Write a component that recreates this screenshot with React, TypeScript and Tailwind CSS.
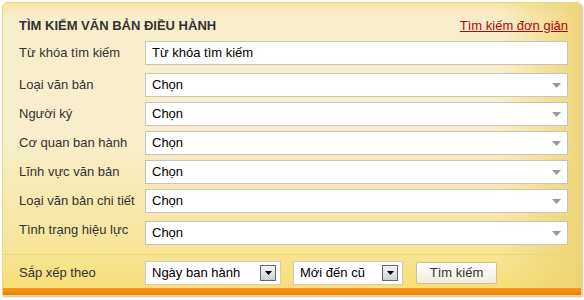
import React from "react";

const labelCls = "w-[126px] shrink-0 text-[13px] text-[#333]";

function Select({ text }: { text: string }) {
  return (
    <div className="relative flex h-[24px] w-[423px] items-center border border-[#c8c4b8] bg-white pl-[6px] text-[13px] text-black">
      <span>{text}</span>
      <svg className="absolute right-[6px] top-[9px]" width="9" height="5" viewBox="0 0 9 5">
        <path d="M0 0 L9 0 L4.5 5 Z" fill="#999" />
      </svg>
    </div>
  );
}

function Row({ label, children, cls }: { label: string; children: React.ReactNode; cls: string }) {
  return (
    <div className={"flex items-center pl-[16px] " + cls}>
      <div className={labelCls}>{label}</div>
      {children}
    </div>
  );
}

function SmallSelect({ text, w }: { text: string; w: string }) {
  return (
    <div className={"flex h-[24px] items-center justify-between border border-[#d0ccc0] bg-white pl-[6px] pr-[4px] text-[13px] text-black " + w}>
      <span>{text}</span>
      <div className="flex h-[16px] w-[16px] items-center justify-center border border-[#666] bg-[linear-gradient(to_bottom,#f4f4f4,#d0d0d0)]">
        <svg width="7" height="4" viewBox="0 0 7 4">
          <path d="M0 0 L7 0 L3.5 4 Z" fill="#000" />
        </svg>
      </div>
    </div>
  );
}

export default function App() {
  return (
    <div
      className="h-[300px] w-[584px] bg-white pl-[2px] pt-[2px]"
      style={{ fontFamily: '"Liberation Sans", Arial, sans-serif' }}
    >
      <div className="relative h-[294px] w-[580px] overflow-hidden rounded-t-[5px] border border-[#ead78c] bg-[linear-gradient(to_right,rgba(248,239,205,0)_86%,rgba(238,210,110,0.85)_100%),linear-gradient(to_bottom,#f6e5a6_0px,#f8eecb_14px,#f8eecb_45%,#f7e6a0_80%,#f9de74_100%)] shadow-[1px_1px_2px_rgba(0,0,0,0.25)]">
        <div className="flex h-[38px] items-start justify-between pl-[16px] pr-[13px] pt-[15px]">
          <div className="text-[13px] font-bold leading-[16px] text-[#333]">TÌM KIẾM VĂN BẢN ĐIỀU HÀNH</div>
          <a className="text-[13px] leading-[16px] text-[#c00000] underline" href="#">
            Tìm kiếm đơn giản
          </a>
        </div>
        <Row label="Từ khóa tìm kiếm" cls="h-[24px]">
          <div className="flex h-[24px] w-[423px] items-center border border-[#c8c4b8] bg-white pl-[6px] text-[13px] text-black">
            Từ khóa tìm kiếm
          </div>
        </Row>
        <div className="mt-[8px] flex flex-col gap-[5px]">
          <Row label="Loại văn bản" cls="h-[24px]"><Select text="Chọn" /></Row>
          <Row label="Người ký" cls="h-[24px]"><Select text="Chọn" /></Row>
          <Row label="Cơ quan ban hành" cls="h-[24px]"><Select text="Chọn" /></Row>
          <Row label="Lĩnh vực văn bản" cls="h-[24px]"><Select text="Chọn" /></Row>
          <Row label="Loại văn bản chi tiết" cls="h-[24px]"><Select text="Chọn" /></Row>
        </div>
        <div className="mt-[4px] flex items-start pl-[16px]">
          <div className={labelCls + " pt-[3px]"}>Tình trạng hiệu lực</div>
          <div className="mt-[4px]"><Select text="Chọn" /></div>
        </div>
        <div className="mt-[9px] border-t border-[#ecd57c]" />
        <div className="flex h-[35px] items-center pl-[16px]">
          <div className={labelCls}>Sắp xếp theo</div>
          <SmallSelect text="Ngày ban hành" w="w-[136px]" />
          <div className="w-[12px]" />
          <SmallSelect text="Mới đến cũ" w="w-[110px]" />
          <div className="w-[13px]" />
          <button className="h-[22px] w-[81px] rounded-[2px] border border-[#cdbf96] bg-[linear-gradient(to_bottom,#ffffff,#f3ecd8)] text-[13px] text-[#333]">
            Tìm kiếm
          </button>
        </div>
        <div className="absolute bottom-0 left-0 right-0 h-[7px] bg-[linear-gradient(to_bottom,#f39a20,#ee7f00)]" />
      </div>
    </div>
  );
}
